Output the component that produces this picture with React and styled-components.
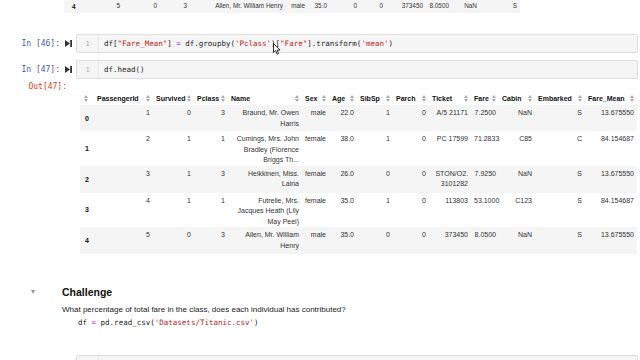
import React from 'react'
import styled, { createGlobalStyle } from 'styled-components'

const GlobalStyle = createGlobalStyle`
  html, body { margin: 0; padding: 0; background: #fff; }
  body { font-family: "Liberation Sans", Arial, sans-serif; color: #000; }
`

const mono = `"DejaVu Sans Mono", "Liberation Mono", monospace`

const Page = styled.div`
  position: relative;
  width: 640px;
  height: 360px;
  overflow: hidden;
  background: #fff;
`

/* ---------- dataframe tables ---------- */

const PrevTable = styled.table`
  margin-left: 64px;
  border-collapse: collapse;
  table-layout: fixed;
  width: 456px;
  font-size: 6.4px;
  color: #333;
`

const Frame = styled.table`
  border-collapse: collapse;
  table-layout: fixed;
  width: 557px;
  font-size: 7px;
  color: #333;
`

const Col = styled.col`
  width: ${p => p.$w}px;
`

const HeadCell = styled.th`
  height: 14px;
  padding: 0 3px 0 ${p => (p.$index ? 4 : 3)}px;
  text-align: left;
  vertical-align: middle;
  font-weight: bold;
  color: #111;
  white-space: nowrap;
`

const HeadInner = styled.div`
  display: flex;
  align-items: center;
  justify-content: space-between;
`

const Row = styled.tr`
  height: ${p => p.$h}px;
  &:nth-child(odd) { background: #f5f5f5; }
`

const PrevRow = styled.tr`
  height: 13px;
  background: #f5f5f5;
`

const Label = styled.th`
  padding: 0 0 0 ${p => p.$pad}px;
  text-align: left;
  vertical-align: middle;
  font-weight: bold;
  color: #111;
`

const Cell = styled.td`
  padding: ${p => (p.$tight ? '0 3px' : '3px 3px 0')};
  text-align: right;
  vertical-align: ${p => (p.$tight ? 'middle' : 'top')};
  line-height: 10.5px;
`

const SortIcon = () => (
  <svg width="4" height="7" viewBox="0 0 4 7" style={{ flex: 'none' }}>
    <polygon points="2,0 4,3 0,3" fill="#a8a8a8" />
    <polygon points="0,4 4,4 2,7" fill="#a8a8a8" />
  </svg>
)

/* ---------- code cells ---------- */

const CellRow = styled.div`
  display: flex;
  align-items: center;
  margin-top: ${p => p.$top}px;
  padding-right: 2px;
`

const Prompt = styled.div`
  width: ${p => p.$w}px;
  flex: none;
  text-align: right;
  font-family: ${mono};
  font-size: 8px;
  line-height: 10px;
  color: ${p => (p.$out ? '#d84315' : '#4a58a8')};
`

const RunButton = styled.div`
  width: 7px;
  height: 7px;
  margin: 0 4px 0 5px;
  display: flex;
`

const Editor = styled.div`
  flex: 1;
  height: 17px;
  display: flex;
  align-items: center;
  background: #f5f5f5;
  border: 1px solid #dedede;
  border-radius: 2px;
`

const Gutter = styled.div`
  width: 21px;
  height: 100%;
  display: flex;
  align-items: center;
  justify-content: center;
  border-right: 1px solid #e8e8e8;
  font-family: ${mono};
  font-size: 7px;
  color: #aaa;
`

const Code = styled.div`
  padding-left: 5px;
  font-family: ${mono};
  font-size: 7.5px;
  color: #222;
  white-space: pre;
`

const Str = styled.span`
  color: #ba2121;
`

const Op = styled.span`
  color: #aa55dd;
`

const Output = styled.div`
  display: flex;
  align-items: flex-start;
  margin-top: 3px;
`

const FrameWrap = styled.div`
  padding: 9px 0 0 13px;
`

/* ---------- markdown ---------- */

const Markdown = styled.div`
  display: flex;
  margin-top: 31px;
`

const Collapse = styled.div`
  width: 62px;
  flex: none;
  padding-left: 31px;
  box-sizing: border-box;
  font-size: 8px;
  line-height: 13px;
  color: #999;
`

const MdBody = styled.div`
  display: flex;
  flex-direction: column;
`

const Heading = styled.h3`
  margin: 0;
  font-size: 10.5px;
  line-height: 14px;
  font-weight: bold;
  color: #111;
`

const Para = styled.p`
  margin: 6px 0 0;
  font-size: 8px;
  line-height: 10px;
  color: #222;
`

const MdCode = styled.div`
  margin: 3px 0 0 16px;
  font-family: ${mono};
  font-size: 7.5px;
  line-height: 10px;
  color: #222;
  white-space: pre;
`

const Cursor = styled.svg`
  position: absolute;
  left: 273px;
  top: 43px;
`

const RunIcon = () => (
  <svg width="7" height="7" viewBox="0 0 7 7">
    <polygon points="0,0 5,3.5 0,7" fill="#333" />
    <rect x="5.2" y="0" width="1.8" height="7" fill="#333" />
  </svg>
)

const InputCell = ({ n, top, children }) => (
  <CellRow $top={top}>
    <Prompt $w={60}>In [{n}]:</Prompt>
    <RunButton><RunIcon /></RunButton>
    <Editor>
      <Gutter>1</Gutter>
      <Code>{children}</Code>
    </Editor>
  </CellRow>
)

const prevCols = [16, 43, 37, 30, 96, 22, 22, 30, 26, 40, 26, 28, 40]
const prevRow = ['4', '5', '0', '3', 'Allen, Mr. William Henry', 'male', '35.0', '0', '0', '373450', '8.0500', 'NaN', 'S']

const cols = [14, 59, 41, 34, 74, 27, 28, 36, 36, 42, 28, 36, 50, 52]
const headers = ['', 'PassengerId', 'Survived', 'Pclass', 'Name', 'Sex', 'Age', 'SibSp', 'Parch', 'Ticket', 'Fare', 'Cabin', 'Embarked', 'Fare_Mean']
const rows = [
  { h: 26, v: ['0', '1', '0', '3', 'Braund, Mr. Owen Harris', 'male', '22.0', '1', '0', 'A/5 21171', '7.2500', 'NaN', 'S', '13.675550'] },
  { h: 34, v: ['1', '2', '1', '1', 'Cumings, Mrs. John Bradley (Florence Briggs Th...', 'female', '38.0', '1', '0', 'PC 17599', '71.2833', 'C85', 'C', '84.154687'] },
  { h: 27, v: ['2', '3', '1', '3', 'Heikkinen, Miss. Laina', 'female', '26.0', '0', '0', 'STON/O2. 3101282', '7.9250', 'NaN', 'S', '13.675550'] },
  { h: 34, v: ['3', '4', '1', '1', 'Futrelle, Mrs. Jacques Heath (Lily May Peel)', 'female', '35.0', '1', '0', '113803', '53.1000', 'C123', 'S', '84.154687'] },
  { h: 27, v: ['4', '5', '0', '3', 'Allen, Mr. William Henry', 'male', '35.0', '0', '0', '373450', '8.0500', 'NaN', 'S', '13.675550'] },
]

const DataFrame = () => (
  <Frame>
    <colgroup>
      {cols.map((w, i) => <Col key={i} $w={w} />)}
    </colgroup>
    <thead>
      <tr>
        {headers.map((h, i) => (
          <HeadCell key={i} $index={i === 0}>
            <HeadInner>
              {h && <span>{h}</span>}
              <SortIcon />
            </HeadInner>
          </HeadCell>
        ))}
      </tr>
    </thead>
    <tbody>
      {rows.map(r => (
        <Row key={r.v[0]} $h={r.h}>
          <Label $pad={5}>{r.v[0]}</Label>
          {r.v.slice(1).map((c, i) => <Cell key={i}>{c}</Cell>)}
        </Row>
      ))}
    </tbody>
  </Frame>
)

export default function App() {
  return (
    <Page>
      <GlobalStyle />
      <PrevTable>
        <colgroup>
          {prevCols.map((w, i) => <Col key={i} $w={w} />)}
        </colgroup>
        <tbody>
          <PrevRow>
            <Label $pad={8}>{prevRow[0]}</Label>
            {prevRow.slice(1).map((c, i) => <Cell key={i} $tight>{c}</Cell>)}
          </PrevRow>
        </tbody>
      </PrevTable>

      <InputCell n={46} top={21}>
        df[<Str>"Fare_Mean"</Str>] <Op>=</Op> df.groupby(<Str>'Pclass'</Str>)[<Str>"Fare"</Str>].transform(<Str>'mean'</Str>)
      </InputCell>
      <InputCell n={47} top={7}>df.head()</InputCell>

      <Output>
        <Prompt $w={67} $out>Out[47]:</Prompt>
        <FrameWrap>
          <DataFrame />
        </FrameWrap>
      </Output>

      <Markdown>
        <Collapse>▾</Collapse>
        <MdBody>
          <Heading>Challenge</Heading>
          <Para>What percentage of total fare in the class, does each individual has contributed?</Para>
          <MdCode>df <Op>=</Op> pd.read_csv(<Str>'Datasets/Titanic.csv'</Str>)</MdCode>
        </MdBody>
      </Markdown>

      <InputCell n={48} top={27}> </InputCell>

      <Cursor width="8" height="12" viewBox="0 0 8 12">
        <path d="M0.5 0.5 L0.5 9.5 L2.6 7.6 L4.2 11.2 L5.6 10.6 L4.1 7.1 L7 7.1 Z" fill="#fff" stroke="#000" strokeWidth="0.8" strokeLinejoin="round" />
      </Cursor>
    </Page>
  )
}
